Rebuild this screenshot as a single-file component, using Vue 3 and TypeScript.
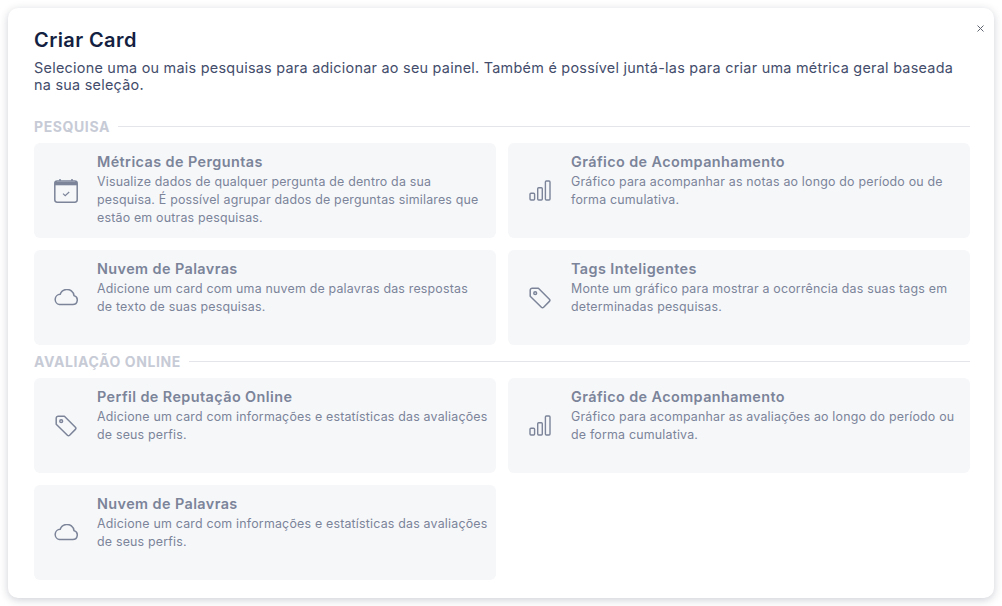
<template>
  <div class="page">
    <div class="modal">
      <button class="close" type="button" aria-label="Fechar">
        <svg width="7" height="7" viewBox="0 0 7 7"><path d="M.5.5l6 6M6.5.5l-6 6" stroke="#5f6470" stroke-width="1" fill="none" /></svg>
      </button>
      <h1>Criar Card</h1>
      <p class="intro">Selecione uma ou mais pesquisas para adicionar ao seu painel. Também é possível juntá-las para criar uma métrica geral baseada na sua seleção.</p>

      <section v-for="section in sections" :key="section.title" class="section">
        <div class="section-title"><span>{{ section.title }}</span><i></i></div>
        <div class="grid">
          <div v-for="card in section.cards" :key="card.title + card.text" class="card">
            <div class="icon">
              <svg v-if="card.icon === 'calendar'" width="26" height="26" viewBox="0 0 26 26" fill="none" stroke="#7b8499" stroke-width="1.5">
                <rect x="1.8" y="3" width="22.4" height="21.2" rx="2.4" />
                <path d="M1.8 5.6h22.4" stroke-width="3.4" />
                <path d="M7 1v2M19 1v2" />
                <path d="M10 15.6l2.2 2 4-3.6" stroke-width="1.2" />
              </svg>
              <svg v-else-if="card.icon === 'chart'" width="22" height="22" viewBox="0 0 22 22" fill="none" stroke="#7b8499" stroke-width="1.4">
                <rect x="1" y="13.2" width="4.6" height="6.8" rx="1" />
                <rect x="8.7" y="7.8" width="4.6" height="12.2" rx="1" />
                <rect x="16.4" y="1" width="4.6" height="19" rx="1" />
              </svg>
              <svg v-else-if="card.icon === 'cloud'" width="26" height="18" viewBox="0 1 26 18" fill="none" stroke="#7b8499" stroke-width="1.5">
                <path d="M6.4 16.6h13.4a4.6 4.6 0 0 0 1.2-9 7 7 0 0 0-7.8-6.1 7.2 7.2 0 0 0-6 4.8 5.2 5.2 0 0 0-.8 10.3z" />
              </svg>
              <svg v-else width="22" height="22" viewBox="0 0 22 22" fill="none" stroke="#7b8499" stroke-width="1.5" stroke-linejoin="round">
                <path d="M1.2 3.2a2 2 0 0 1 2-2h6.2l11 11a1.6 1.6 0 0 1 0 2.2l-5.8 5.8a1.6 1.6 0 0 1-2.2 0l-11.2-11z" />
                <circle cx="6.2" cy="6.2" r="1.4" />
              </svg>
            </div>
            <div class="body">
              <h3>{{ card.title }}</h3>
              <p>{{ card.text }}</p>
            </div>
          </div>
        </div>
      </section>
    </div>
  </div>
</template>

<script setup lang="ts">
type Card = { icon: 'calendar' | 'chart' | 'cloud' | 'tag'; title: string; text: string }

// non-breaking space in "de texto" keeps the same line break as the reference
const sections: { title: string; cards: Card[] }[] = [
  {
    title: 'PESQUISA',
    cards: [
      { icon: 'calendar', title: 'Métricas de Perguntas', text: 'Visualize dados de qualquer pergunta de dentro da sua pesquisa. É possível agrupar dados de perguntas similares que estão em outras pesquisas.' },
      { icon: 'chart', title: 'Gráfico de Acompanhamento', text: 'Gráfico para acompanhar as notas ao longo do período ou de forma cumulativa.' },
      { icon: 'cloud', title: 'Nuvem de Palavras', text: 'Adicione um card com uma nuvem de palavras das respostas de\u00a0texto de suas pesquisas.' },
      { icon: 'tag', title: 'Tags Inteligentes', text: 'Monte um gráfico para mostrar a ocorrência das suas tags em determinadas pesquisas.' },
    ],
  },
  {
    title: 'AVALIAÇÃO ONLINE',
    cards: [
      { icon: 'tag', title: 'Perfil de Reputação Online', text: 'Adicione um card com informações e estatísticas das avaliações de seus perfis.' },
      { icon: 'chart', title: 'Gráfico de Acompanhamento', text: 'Gráfico para acompanhar as avaliações ao longo do período ou de forma cumulativa.' },
      { icon: 'cloud', title: 'Nuvem de Palavras', text: 'Adicione um card com informações e estatísticas das avaliações de seus perfis.' },
    ],
  },
]
</script>

<style>
html, body {
  margin: 0;
  background: #fff;
}
</style>

<style scoped>
.page {
  box-sizing: border-box;
  height: 606px;
  padding: 8px;
  font-family: Inter, "Open Sans", sans-serif;
  overflow: hidden;
}

.modal {
  position: relative;
  box-sizing: border-box;
  height: 590px;
  padding: 18px 24px 0 26px;
  background: #fff;
  border-radius: 10px;
  box-shadow: 0 2px 8px rgba(30, 40, 70, 0.22);
}

.close {
  position: absolute;
  top: 17px;
  right: 10px;
  display: flex;
  padding: 0;
  border: 0;
  background: none;
}

h1 {
  margin: 0;
  font-size: 20px;
  line-height: 28px;
  font-weight: 600;
  letter-spacing: 0.4px;
  color: #141f42;
}

.intro {
  margin: 5px 0 0;
  max-width: 925px;
  font-size: 14.4px;
  line-height: 17px;
  letter-spacing: 0.26px;
  color: #434d6b;
}

.section-title {
  display: flex;
  align-items: center;
  gap: 8px;
  height: 18px;
  margin-bottom: 8px;
  font-size: 14px;
  font-weight: 700;
  letter-spacing: 0.6px;
  color: #c7cbd6;
}

.section-title i {
  flex: 1;
  height: 1px;
  background: #e3e5ea;
}

.section {
  margin-top: 7px;
}

.intro + .section {
  margin-top: 24px;
}

.grid {
  display: grid;
  grid-template-columns: 462px 462px;
  grid-auto-rows: 95px;
  gap: 12px;
}

.card {
  display: flex;
  box-sizing: border-box;
  padding: 10px 4px 0 0;
  background: #f6f7f9;
  border-radius: 6px;
}

.icon {
  flex: none;
  width: 63px;
  margin-top: -10px;
  display: flex;
  align-items: center;
  justify-content: center;
}

h3 {
  margin: 0 0 2px;
  font-size: 14.4px;
  line-height: 18px;
  font-weight: 600;
  letter-spacing: 0.42px;
  color: #7b8499;
}

.body p {
  margin: 0;
  font-size: 12.4px;
  line-height: 18px;
  letter-spacing: 0.2px;
  color: #7b8499;
}
</style>
